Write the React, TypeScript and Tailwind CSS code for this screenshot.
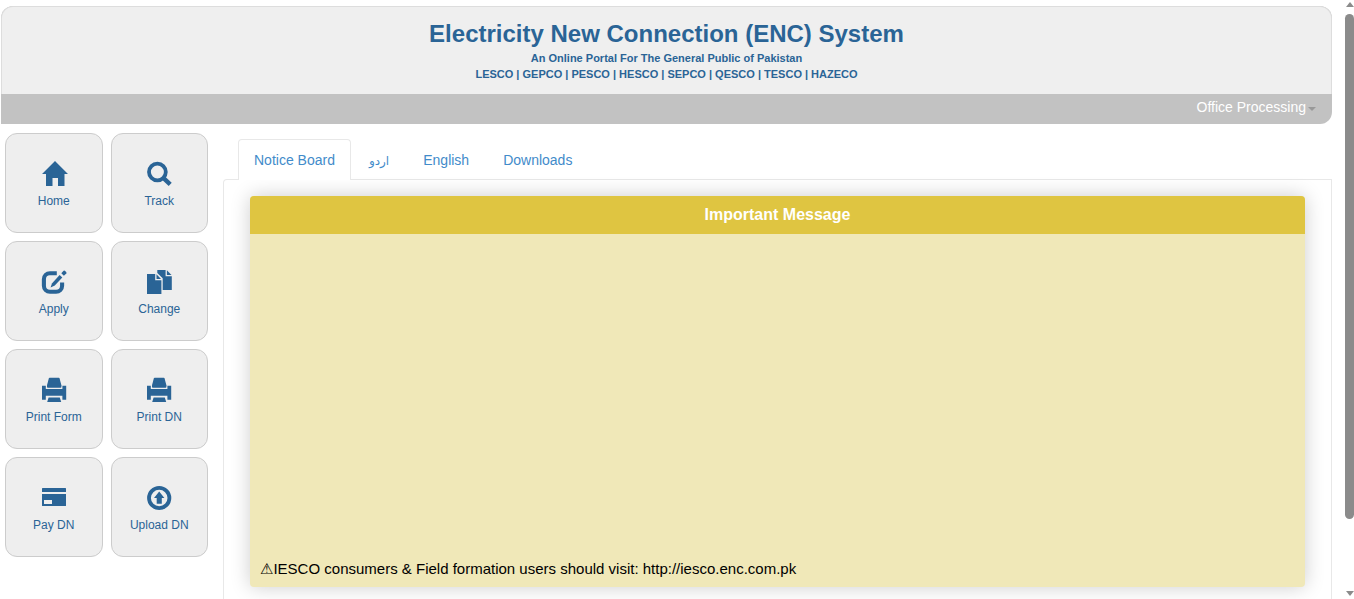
import type { ReactNode } from "react";

const tiles: { label: string; icon: ReactNode }[] = [
  {
    label: "Home",
    icon: <path d="M14 0L27 13H23.5V25H17V17H11.5V25H5V13H1Z" />,
  },
  {
    label: "Track",
    icon: (
      <g fill="none" stroke="currentColor">
        <circle cx="11.4" cy="11" r="8.4" strokeWidth="3.8" />
        <path d="M17 16.6L24.2 23.4" strokeWidth="4.4" />
      </g>
    ),
  },
  {
    label: "Apply",
    icon: (
      <>
        <path
          d="M15.8 4.2H8.9a6 6 0 0 0-6 6v6.6a6 6 0 0 0 6 6h6.2a6 6 0 0 0 6-6V13.6"
          fill="none"
          stroke="currentColor"
          strokeWidth="4.1"
        />
        <path d="M9.6 18.6L10.9 14.4L18.6 6L21.3 8.5L13.8 16.6Z" />
        <path d="M20.3 4.2L22.6 1.8Q23.3 1.2 24.1 1.9L25.1 2.9Q25.8 3.7 25.3 4.5L22.9 6.8Z" />
      </>
    ),
  },
  {
    label: "Change",
    icon: (
      <>
        <path d="M1 5H9.2V11.3H15.4V25H1Z" />
        <path d="M10.5 5.3L15 10H10.5Z" />
        <path d="M11.3 1H19.6V7.3H25.8V21H16.7V9.3L11.3 4Z" />
        <path d="M20.9 1.3L25.5 6H20.9Z" />
      </>
    ),
  },
  { label: "Print Form", icon: <PrinterShape /> },
  { label: "Print DN", icon: <PrinterShape /> },
  {
    label: "Pay DN",
    icon: (
      <>
        <path d="M1.5 3H24.5Q25 3 25 3.5V7H1V3.5Q1 3 1.5 3Z" />
        <path
          fillRule="evenodd"
          d="M1 9H25V20.5Q25 21 24.5 21H1.5Q1 21 1 20.5ZM3 15V19H11V15Z"
        />
      </>
    ),
  },
  {
    label: "Upload DN",
    icon: (
      <>
        <circle
          cx="13.2"
          cy="13"
          r="10.2"
          fill="none"
          stroke="currentColor"
          strokeWidth="3.8"
        />
        <path d="M13.2 6.4L18.4 12.9H15.8V18.8H10.7V12.9H8Z" />
      </>
    ),
  },
];

const tabs = ["Notice Board", "اردو", "English", "Downloads"];

function PrinterShape() {
  return (
    <>
      <path d="M8.6 .7H17.8Q18.4 .7 18.6 1.4L20.4 8.2V9.9Q20.4 10.7 19.6 10.7H6.8Q6 10.7 6 9.9V8.2L7.8 1.4Q8 .7 8.6 .7Z" />
      <path d="M1 8.7H4.8V11.9H21.4V8.7H25.2V22.7H21.4V18.8H4.8V22.7H1Z" />
      <path d="M7.6 20.4H18.8L20.2 24.9H6.2Z" />
    </>
  );
}

function Header() {
  return (
    <header className="overflow-hidden rounded-t-xl rounded-br-xl bg-[#c2c2c2]">
      <div className="rounded-t-xl border border-b-0 border-[#dddddd] bg-[#efefef] pt-[11px] pb-3 text-center font-bold text-[#2a6496]">
        <h1 className="mb-px text-[24px] leading-[31px]">
          Electricity New Connection (ENC) System
        </h1>
        <p className="text-[11px] leading-4">
          An Online Portal For The General Public of Pakistan
        </p>
        <p className="text-[11px] leading-4">
          LESCO | GEPCO | PESCO | HESCO | SEPCO | QESCO | TESCO | HAZECO
        </p>
      </div>
      <nav className="flex justify-end pr-4">
        <button className="flex h-[30px] items-center text-sm text-white">
          <span className="pb-1">Office Processing</span>
          <span className="ml-[2px] border-x-4 border-t-4 border-x-transparent border-t-[#999999]" />
        </button>
      </nav>
    </header>
  );
}

function Sidebar() {
  return (
    <nav className="grid w-[203px] shrink-0 grid-cols-2 content-start gap-2">
      {tiles.map((tile) => (
        <a
          key={tile.label}
          href="#"
          className="flex h-[100px] flex-col items-center gap-[6px] rounded-xl border border-[#cccccc] bg-[#eeeeee] pt-[27px] text-xs text-[#2a6496]"
        >
          <svg
            viewBox="0 0 26 26"
            className="size-[26px] overflow-visible"
            fill="currentColor"
            aria-hidden="true"
          >
            {tile.icon}
          </svg>
          {tile.label}
        </a>
      ))}
    </nav>
  );
}

function NoticeBoard() {
  return (
    <main className="flex min-w-0 flex-1 flex-col pt-[6px]">
      <ul className="flex gap-[2px] pl-[15px] text-sm text-[#428bca]">
        {tabs.map((tab, i) => (
          <li key={tab} className="relative -mb-px">
            <a
              href="#"
              className={
                i === 0
                  ? "block rounded-t border border-b-0 border-[#e8e8e8] bg-white px-[15px] py-[10px]"
                  : "block border border-b-0 border-transparent px-[15px] pt-[10px] pb-[9px]"
              }
            >
              {tab === "اردو" ? (
                <span lang="ur" className="text-xs leading-4">
                  {tab}
                </span>
              ) : (
                tab
              )}
            </a>
          </li>
        ))}
      </ul>
      <div className="flex-1 rounded-tl border border-b-0 border-[#e8e8e8] px-[26px] pt-4">
        <section className="overflow-hidden rounded bg-[#f0e8b8] shadow-[0_0_20px_rgba(0,0,0,0.2)]">
          <h2 className="bg-[#dfc541] text-center text-base leading-[38px] font-bold text-white">
            Important Message
          </h2>
          <div className="flex h-[353px] items-end px-[10px] pb-2">
            <p className="text-[15px] leading-5 text-black">
              ⚠IESCO consumers &amp; Field formation users should visit:
              http://iesco.enc.com.pk
            </p>
          </div>
        </section>
      </div>
    </main>
  );
}

function ScrollRail() {
  return (
    <div className="flex w-[9px] shrink-0 flex-col items-center pt-[2px] pb-[3px]">
      <span className="border-x-4 border-b-5 border-x-transparent border-b-[#8b8b8b]" />
      <div className="mt-[7px] mb-[72px] w-full flex-1 rounded-full bg-[#8b8b8b]" />
      <span className="border-x-4 border-t-5 border-x-transparent border-t-[#8b8b8b]" />
    </div>
  );
}

export default function App() {
  return (
    <div className="flex h-screen overflow-hidden bg-white font-['Liberation_Sans','DejaVu_Sans',sans-serif]">
      <div className="mr-[13px] flex min-w-0 flex-1 flex-col pt-[6px] pl-px">
        <Header />
        <div className="flex flex-1 gap-[15px] pt-[9px] pl-1">
          <Sidebar />
          <NoticeBoard />
        </div>
      </div>
      <ScrollRail />
    </div>
  );
}
